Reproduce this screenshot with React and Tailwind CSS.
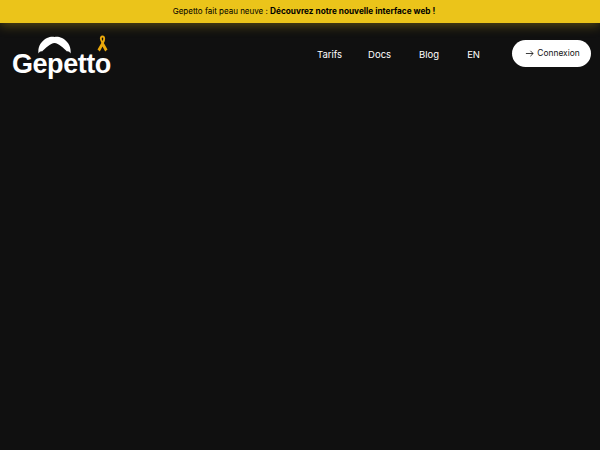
import React from "react";

const font = { fontFamily: '"Inter", "Liberation Sans", sans-serif' };

function Logo() {
  return (
    <div className="relative w-[100px] h-[42px]">
      <svg className="absolute left-[26px] top-px" width="33" height="18" viewBox="0 0 33 18">
        <path d="M0.5 17.5 C-0.5 11 3 5 9 2 C12 0.6 14.5 0.4 16.5 1 C18.5 0.4 21 0.6 24 2 C30 5 33.5 11 32.5 17.5 C31.5 15.5 30 15 29 15.5 C26 12.5 20.5 7 16.5 7 C12.5 7 7 12.5 4 15.5 C3 15 1.5 15.5 0.5 17.5 Z" fill="#fff" />
      </svg>
      <svg className="absolute left-[85px] top-0" width="11" height="17" viewBox="0 0 11 17">
        <path d="M5.5 0.5 C3.5 0.5 2.5 2.5 3 4.5 C3.5 6 4.2 7 4.3 8 L0.5 14.5 L2.8 16.5 L5.5 11.5 L8.2 16.5 L10.5 14.5 L6.8 8 C8 6.5 8.5 3.5 7.8 2 C7.3 1 6.5 0.5 5.5 0.5 Z M5.5 2.5 C6.5 2.5 6.5 4.5 5.5 6 C4.5 4.5 4.5 2.5 5.5 2.5 Z" fill="#eba90b" fillRule="evenodd" />
      </svg>
      <span className="absolute left-0 top-[14px] text-[27px] leading-[30px] font-bold text-white tracking-[-0.45px]" style={{ fontFamily: '"Liberation Sans", sans-serif' }}>Gepetto</span>
    </div>
  );
}

export default function App() {
  return (
    <div className="w-[600px] h-[450px] bg-[#101010] overflow-hidden" style={font}>
      <div className="h-[23px] bg-[#ebc41a] flex items-center justify-center pl-[8px] text-[8px] text-black shadow-[0_2px_12px_rgba(235,196,26,0.35)]">
        <p>
          Gepetto fait peau neuve :&nbsp;
          <span className="font-bold text-[8.25px]">Découvrez notre nouvelle interface web !</span>
        </p>
      </div>
      <div className="flex items-start justify-between pl-[12px] pr-[9px] pt-[12px]">
        <Logo />
        <nav className="flex items-start text-[9.5px] text-white mt-[5px] leading-[25px]">
          <span className="mr-[26px] pt-[2px]">Tarifs</span>
          <span className="mr-[28px] pt-[2px]">Docs</span>
          <span className="mr-[28px] pt-[2px]">Blog</span>
          <span className="mr-[32px] pt-[2px]">EN</span>
          <button className="h-[27px] w-[79px] rounded-full bg-white text-[#111] flex items-center justify-center gap-[3px] pl-[2px] text-[8.4px]">
            <svg width="9" height="9" viewBox="0 0 10 10" fill="none" stroke="#111" strokeWidth="0.9">
              <path d="M1 5 H9 M6 2 L9 5 L6 8" />
            </svg>
            Connexion
          </button>
        </nav>
      </div>
    </div>
  );
}
